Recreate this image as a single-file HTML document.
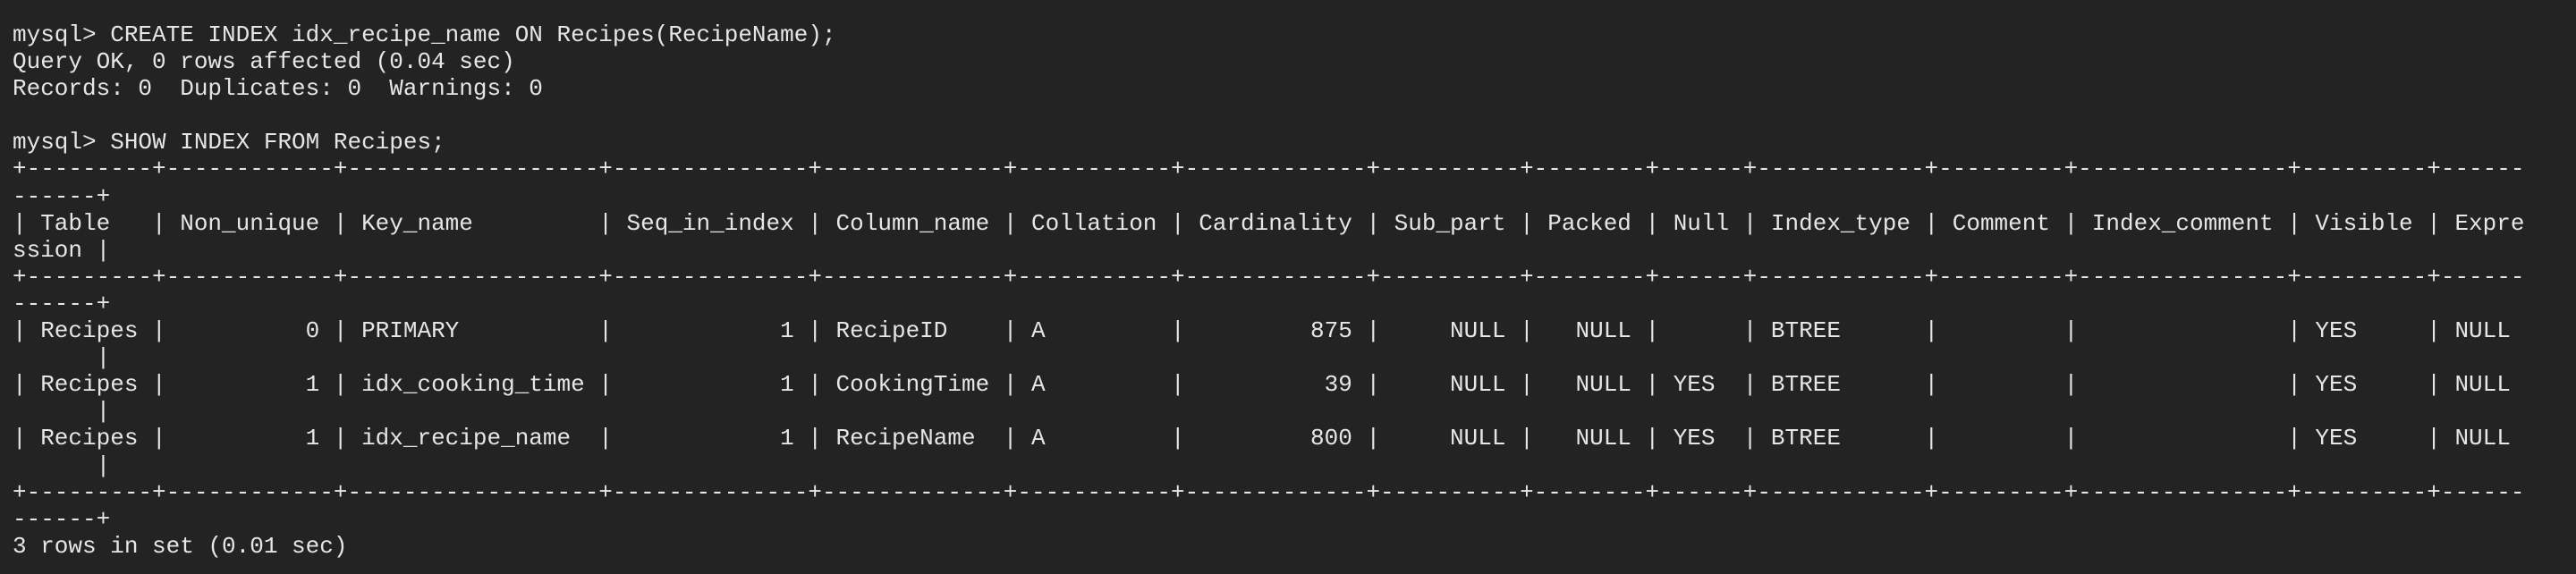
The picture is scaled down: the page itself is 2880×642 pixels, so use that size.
<!DOCTYPE html>
<html><head><meta charset="utf-8"><style>
html,body{margin:0;padding:0;background:#232323;width:2880px;height:642px;overflow:hidden}
pre{margin:0;position:absolute;left:14px;top:24px;font-family:"Liberation Mono",monospace;font-size:26px;line-height:30.1px;color:#e6e6e6;white-space:pre}
</style></head><body><pre>mysql&gt; CREATE INDEX idx_recipe_name ON Recipes(RecipeName);
Query OK, 0 rows affected (0.04 sec)
Records: 0  Duplicates: 0  Warnings: 0

mysql&gt; SHOW INDEX FROM Recipes;
+---------+------------+------------------+--------------+-------------+-----------+-------------+----------+--------+------+------------+---------+---------------+---------+------
------+
| Table   | Non_unique | Key_name         | Seq_in_index | Column_name | Collation | Cardinality | Sub_part | Packed | Null | Index_type | Comment | Index_comment | Visible | Expre
ssion |
+---------+------------+------------------+--------------+-------------+-----------+-------------+----------+--------+------+------------+---------+---------------+---------+------
------+
| Recipes |          0 | PRIMARY          |            1 | RecipeID    | A         |         875 |     NULL |   NULL |      | BTREE      |         |               | YES     | NULL 
      |
| Recipes |          1 | idx_cooking_time |            1 | CookingTime | A         |          39 |     NULL |   NULL | YES  | BTREE      |         |               | YES     | NULL 
      |
| Recipes |          1 | idx_recipe_name  |            1 | RecipeName  | A         |         800 |     NULL |   NULL | YES  | BTREE      |         |               | YES     | NULL 
      |
+---------+------------+------------------+--------------+-------------+-----------+-------------+----------+--------+------+------------+---------+---------------+---------+------
------+
3 rows in set (0.01 sec)</pre></body></html>
